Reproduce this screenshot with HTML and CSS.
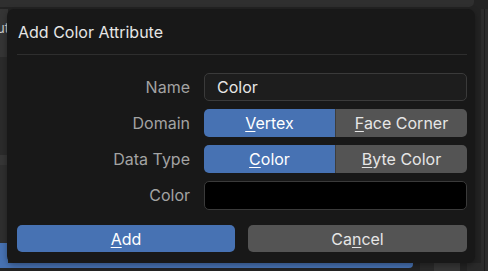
FILE: index.html
```html
<!DOCTYPE html>
<html lang="en">
<head>
    <meta charset="UTF-8">
    <title>Add Color Attribute</title>
    <link rel="stylesheet" href="styles.css">
</head>
<body>
    <div class="screen">
        <div class="topbar"></div>
        <div class="workspace">
            <div class="side">
                <div class="side-head">ut</div>
                <div class="side-body"></div>
                <div class="side-row"></div>
                <div class="side-body alt"></div>
                <div class="side-blue"></div>
            </div>
            <div class="middle">
                <div class="middle-fill"></div>
                <div class="bottom-strip">
                    <div class="blue-band"></div>
                    <div class="block"></div>
                    <div class="block light"></div>
                    <div class="block"></div>
                </div>
            </div>
            <div class="edge"></div>
        </div>
    </div>

    <div class="dialog">
        <div class="dialog-head">Add Color Attribute</div>

        <div class="form">
            <label class="label">Name</label>
            <div class="field">Color</div>

            <label class="label">Domain</label>
            <div class="segments">
                <div class="seg active"><u>V</u>ertex</div>
                <div class="seg"><u>F</u>ace Corner</div>
            </div>

            <label class="label">Data Type</label>
            <div class="segments">
                <div class="seg active"><u>C</u>olor</div>
                <div class="seg"><u>B</u>yte Color</div>
            </div>

            <label class="label">Color</label>
            <div class="swatch"></div>
        </div>

        <div class="actions">
            <button class="btn btn-primary"><u>A</u>dd</button>
            <button class="btn">Ca<u>n</u>cel</button>
        </div>
    </div>
</body>
</html>
```

FILE: styles.css
```css
:root {
    --bg: #232323;
    --panel: #2b2b2b;
    --popup: #181818;
    --blue: #4772b3;
    --gray: #545454;
    --text: #e6e6e6;
    --muted: #a3a3a3;
}

* {
    box-sizing: border-box;
    margin: 0;
    padding: 0;
}

body {
    width: 488px;
    height: 271px;
    overflow: hidden;
    position: relative;
    background: var(--bg);
    font-family: Inter, "Noto Sans", sans-serif;
    font-size: 16px;
}

/* background editor, mostly hidden by the popup */
.screen {
    display: flex;
    flex-direction: column;
    height: 100%;
}

.topbar {
    height: 7px;
    width: 474px;
    background: #2f2f2f;
    border-bottom-right-radius: 5px;
    flex-shrink: 0;
}

.workspace {
    flex: 1;
    display: flex;
    padding-top: 2px;
}

.side {
    width: 8px;
    display: flex;
    flex-direction: column;
}

.side-head {
    height: 48px;
    background: #353535;
    color: #cfcfcf;
    font-size: 13px;
    line-height: 38px;
    text-indent: -3px;
    overflow: hidden;
}

.side-body {
    height: 98px;
    background: #2b2b2b;
}

.side-body.alt {
    height: 78px;
    background: #2f2f2f;
}

.side-row {
    height: 10px;
    background: #363636;
}

.side-blue {
    height: 25px;
    background: var(--blue);
}

.middle {
    flex: 1;
    display: flex;
    flex-direction: column;
}

.middle-fill {
    flex: 1;
}

.bottom-strip {
    height: 8px;
    display: flex;
}

.blue-band {
    width: 405px;
    height: 5px;
    background: var(--blue);
    border-bottom-right-radius: 4px;
}

.block {
    width: 14px;
    background: #2a2a2a;
    margin-left: 7px;
}

.block.light {
    width: 26px;
    background: #363636;
    margin-left: 0;
}

.edge {
    width: 12px;
    background: var(--panel);
    border-right: 3px solid var(--panel);
    box-shadow: inset -1px 0 0 #1c1c1c;
}

/* popup */
.dialog {
    position: absolute;
    left: 7px;
    top: 9px;
    width: 468px;
    height: 254px;
    background: var(--popup);
    border-radius: 7px;
    padding: 0 8px 0 10px;
    box-shadow: 0 2px 6px rgba(0, 0, 0, 0.35);
}

.dialog-head {
    height: 46px;
    display: flex;
    align-items: center;
    padding-left: 1px;
    color: var(--text);
    border-bottom: 1px solid #2e2e2e;
}

.form {
    display: grid;
    grid-template-columns: 173px 1fr;
    column-gap: 14px;
    row-gap: 8px;
    margin-top: 18px;
}

.label {
    height: 28px;
    line-height: 29px;
    text-align: right;
    color: var(--muted);
}

.field {
    height: 28px;
    line-height: 26px;
    padding-left: 12px;
    background: #1d1d1d;
    border: 1px solid #3a3a3a;
    border-radius: 5px;
    color: var(--text);
}

.segments {
    display: flex;
    height: 28px;
    border-radius: 5px;
    overflow: hidden;
}

.seg {
    flex: 1;
    background: var(--gray);
    color: var(--text);
    text-align: center;
    line-height: 28px;
}

.seg + .seg {
    border-left: 1px solid #3d3d3d;
}

.seg.active {
    background: var(--blue);
    color: #fff;
}

.swatch {
    height: 29px;
    background: #000;
    border: 1px solid #3a3a3a;
    border-radius: 5px;
}

u {
    text-decoration-thickness: 1px;
    text-underline-offset: 2px;
}

.actions {
    display: grid;
    grid-template-columns: 218px 1fr;
    gap: 13px;
    margin-top: 15px;
}

.btn {
    height: 27px;
    border: none;
    border-radius: 5px;
    background: var(--gray);
    color: var(--text);
    font: inherit;
    cursor: pointer;
}

.btn-primary {
    background: var(--blue);
    color: #fff;
}
```
